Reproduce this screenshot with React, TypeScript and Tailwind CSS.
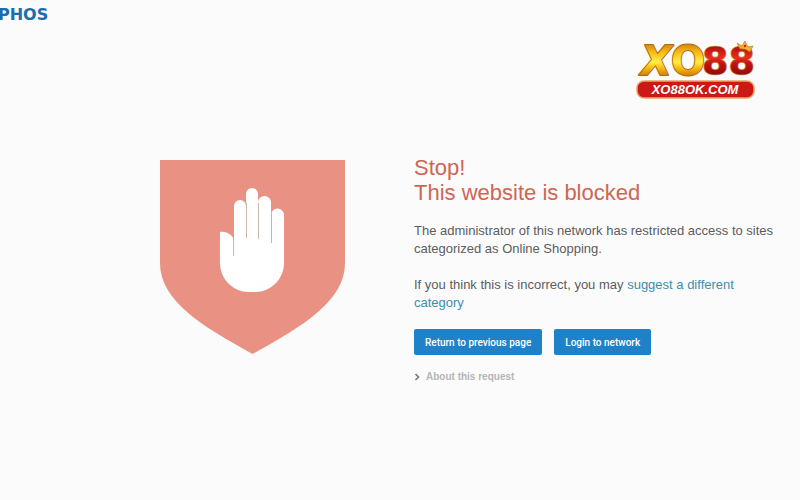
import { useState } from 'react'

function VendorLogo() {
  return (
    <div className="-ml-0.5 pt-[7px] font-['DejaVu_Sans'] text-base leading-4 font-bold text-[#1c6cae]">
      PHOS
    </div>
  )
}

function BrandBadge() {
  return (
    <svg className="overflow-visible" width="120" height="60" viewBox="0 0 120 60" role="img" aria-label="XO88 XO88OK.COM">
      <defs>
        <linearGradient id="gold" gradientUnits="userSpaceOnUse" x1="0" y1="3" x2="0" y2="34">
          <stop offset="0" stopColor="#d98a10" />
          <stop offset="0.25" stopColor="#f8bd18" />
          <stop offset="0.55" stopColor="#ffee4a" />
          <stop offset="0.75" stopColor="#f8b810" />
          <stop offset="1" stopColor="#cf7a08" />
        </linearGradient>
        <linearGradient id="ruby" gradientUnits="userSpaceOnUse" x1="0" y1="3" x2="0" y2="34">
          <stop offset="0" stopColor="#a80c10" />
          <stop offset="0.4" stopColor="#ea2c1e" />
          <stop offset="0.6" stopColor="#c31212" />
          <stop offset="1" stopColor="#8f0a0c" />
        </linearGradient>
      </defs>
      <g fontFamily="DejaVu Sans" fontWeight="bold" fontSize="40" strokeLinejoin="round" paintOrder="stroke">
        <g fill="url(#gold)" stroke="#b06a10" strokeWidth="2">
          <text x="5" y="33" fontStyle="italic">X</text>
          <text x="35" y="33">O</text>
        </g>
        <g fill="url(#ruby)" stroke="#c98a3c" strokeWidth="1.5" fontSize="38">
          <text x="66" y="32">88</text>
        </g>
      </g>
      <path d="M104 7 L101 1 L106 4 L109 -1 L112 5 L117 4 L114 10 Q109 6 104 7 Z" fill="#f2b32c" stroke="#b8700f" strokeWidth="0.6" />
      <circle cx="109" cy="4" r="1.2" fill="#d32018" />
      <rect x="1" y="39" width="117" height="17" rx="7" fill="#cc1915" stroke="#efa36a" strokeWidth="1.5" />
      <text
        x="59"
        y="52"
        textAnchor="middle"
        fill="#fff"
        fontFamily="Liberation Sans"
        fontWeight="bold"
        fontStyle="italic"
        fontSize="13"
      >
        XO88OK.COM
      </text>
    </svg>
  )
}

function BlockedShield() {
  return (
    <svg className="shrink-0" width="186" height="195" viewBox="0 0 186 195" aria-hidden="true">
      <path
        d="M0 0 H185 V103 C185 141 143 166 92.500 194 C42 166 0 141 0 103 Z"
        fill="#e99283"
      />
      {/* palm and fingers */}
      <path
        d="M60 72 C66 71 71 74 74 79 V46 A6 6 0 0 1 86 46 V34 A6 6 0 0 1 98 34 V42 A6 6 0 0 1 111 43 V55 A6.500 6.500 0 0 1 124 55 V103 C124 119 111 132 95 132 H89 C73 132 60 119 60 103 Z"
        fill="#fff"
      />
      <path d="M73.500 77 V96 M86.500 43 V78 M98.500 43 V79 M111.500 53 V83" stroke="#b9a29c" strokeWidth="0.8" />
    </svg>
  )
}

export default function App() {
  const [showDetails, setShowDetails] = useState(false)

  return (
    <div className="min-h-screen bg-[#fbfbfb] font-['Liberation_Sans',Arial,sans-serif] text-[#5c5c5e]">
      <header className="flex items-start justify-between pr-11">
        <VendorLogo />
        <div className="pt-[42px]">
          <BrandBadge />
        </div>
      </header>

      <main className="flex items-start pt-[58px] pr-6 pl-[20%]">
        <BlockedShield />

        <section className="ml-[68px] min-w-0 flex-1">
          <h1 className="-mt-[5px] text-[22px] leading-[25px] text-[#cf6655]">
            Stop!
            <br />
            This website is blocked
          </h1>

          <p className="mt-[17px] text-[13px] leading-[18px]">
            The administrator of this network has restricted access to sites categorized as Online Shopping.
          </p>
          <p className="mt-[18px] text-[13px] leading-[18px]">
            If you think this is incorrect, you may{' '}
            <a href="#suggest" className="text-[#3c8fac] hover:underline">suggest a different category</a>
          </p>

          <div className="mt-[17px] flex gap-3">
            <button type="button" className="h-[26px] rounded-xs bg-[#1f82c9] px-[11px] font-[Roboto] text-[10px] font-medium text-white">
              Return to previous page
            </button>
            <button type="button" className="h-[26px] rounded-xs bg-[#1f82c9] px-[11px] font-[Roboto] text-[10px] font-medium text-white">
              Login to network
            </button>
          </div>

          <button
            type="button"
            aria-expanded={showDetails}
            onClick={() => setShowDetails(!showDetails)}
            className="mt-3.5 flex items-center gap-1.5 text-[10px] leading-4 font-bold text-[#b5b5b7]"
          >
            <svg width="6" height="8" viewBox="0 0 6 8" fill="none" aria-hidden="true">
              <path d="M1.500 1 L4.500 4 L1.500 7" stroke="#77777a" strokeWidth="1.6" />
            </svg>
            About this request
          </button>
        </section>
      </main>
    </div>
  )
}
